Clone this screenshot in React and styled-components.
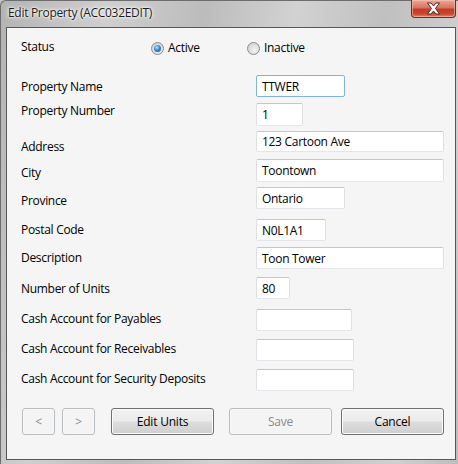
import React from "react";
import styled, { createGlobalStyle } from "styled-components";

const GlobalStyle = createGlobalStyle`
  html, body {
    margin: 0;
    padding: 0;
    background: #c4c4c4;
  }
  body {
    font-family: "Open Sans", "Noto Sans", sans-serif;
    font-size: 12px;
    letter-spacing: -0.3px;
    color: #000;
  }
`;

const Frame = styled.div`
  width: 458px;
  height: 464px;
  box-sizing: border-box;
  padding: 0 2px 4px 5px;
  display: flex;
  flex-direction: column;
  background: linear-gradient(
    100deg,
    #b3b3b3 0%,
    #cfcfcf 20%,
    #bcbcbc 38%,
    #d2d2d2 55%,
    #c0c0c0 72%,
    #d0d0d0 88%,
    #bdbdbd 100%
  );
  border-top: 1px solid #6d6d6d;
  border-left: 1px solid #6d6d6d;
  border-top-left-radius: 6px;
`;

const TitleBar = styled.div`
  height: 26px;
  display: flex;
  align-items: flex-start;
  justify-content: space-between;
`;

const Title = styled.div`
  padding: 4px 0 0 2px;
  font-size: 12px;
  line-height: 16px;
  color: #1a1a1a;
  text-shadow: 0 0 6px #fff, 0 0 3px #fff, 0 0 2px #fff;
`;

const CloseButton = styled.div`
  width: 45px;
  height: 18px;
  margin-top: -1px;
  display: flex;
  align-items: center;
  justify-content: center;
  box-sizing: border-box;
  border: 1px solid #6b2a22;
  border-top: none;
  border-radius: 0 0 4px 4px;
  background: linear-gradient(
    #e9a99a 0%,
    #d9735f 45%,
    #c43c25 55%,
    #c8452d 80%,
    #e0806a 100%
  );
  box-shadow: inset 0 0 0 1px rgba(255, 200, 190, 0.55);
`;

const Panel = styled.div`
  flex: 1;
  box-sizing: border-box;
  border: 1px solid #575757;
  background: #f5f5f5;
  padding: 10px 11px 0 14px;
  display: flex;
  flex-direction: column;
`;

const Row = styled.div`
  display: grid;
  grid-template-columns: 235px 1fr;
  align-items: start;
  height: ${(p) => p.$h}px;
`;

const Label = styled.div`
  padding-top: ${(p) => p.$dy}px;
  line-height: 16px;
  white-space: nowrap;
`;

const RadioGroup = styled.div`
  display: flex;
  padding-top: 2px;
  margin-left: -105px;
`;

const RadioOption = styled.label`
  display: flex;
  align-items: center;
  gap: 4px;
  width: 96px;
  line-height: 16px;
`;

const RadioDot = styled.span`
  width: 11px;
  height: 11px;
  border-radius: 50%;
  border: 1px solid #8a8c8e;
  background: radial-gradient(circle at 60% 65%, #f4f4f4 0%, #d6d6d6 70%, #c8c8c8 100%);
  display: flex;
  align-items: center;
  justify-content: center;
  &::after {
    content: "";
    display: ${(p) => (p.$checked ? "block" : "none")};
    width: 7px;
    height: 7px;
    border-radius: 50%;
    background: radial-gradient(circle at 40% 35%, #bfe4fb 0%, #3a8ad0 45%, #134f86 100%);
  }
`;

const Field = styled.input`
  width: ${(p) => p.$w}px;
  height: ${(p) => p.$hgt || 22}px;
  box-sizing: border-box;
  margin: 0;
  padding: 0 0 0 5px;
  border: 1px solid;
  border-color: ${(p) =>
    p.$focus ? "#7fb3e3" : "#c3c6cc #dcdfe4 #e3e6ea #dcdfe4"};
  border-radius: 2px;
  background: #fff;
  font-family: "Open Sans", "Noto Sans", sans-serif;
  font-size: 12px;
  letter-spacing: -0.3px;
  color: #000;
  outline: none;
`;

const ButtonBar = styled.div`
  display: flex;
  margin-top: 17px;
  padding-left: 1px;
`;

const Button = styled.button`
  width: ${(p) => p.$w}px;
  height: 27px;
  margin: 0 0 0 ${(p) => p.$ml || 0}px;
  padding: 0;
  box-sizing: border-box;
  border-radius: 3px;
  font-family: "Open Sans", "Noto Sans", sans-serif;
  font-size: 12px;
  letter-spacing: -0.2px;
  border: 1px solid ${(p) => (p.disabled ? "#b9bcbf" : "#707070")};
  color: ${(p) => (p.disabled ? "#8a8a8a" : "#000")};
  background: ${(p) =>
    p.disabled
      ? "#f4f4f4"
      : "linear-gradient(#f2f2f2 0%, #ebebeb 48%, #dddddd 52%, #cfcfcf 100%)"};
  box-shadow: inset 0 0 0 1px ${(p) => (p.disabled ? "#f9f9f9" : "#fbfbfb")};
`;

const rows = [
  { label: "Property Name", value: "TTWER", w: 89, h: 28, dy: 4, focus: true },
  { label: "Property Number", value: "1", w: 47, h: 28, dy: 0, fh: 23 },
  { label: "Address", value: "123 Cartoon Ave", w: 188, h: 28, dy: 8, fh: 21 },
  { label: "City", value: "Toontown", w: 188, h: 28, dy: 6, fh: 23 },
  { label: "Province", value: "Ontario", w: 89, h: 32, dy: 6 },
  { label: "Postal Code", value: "N0L1A1", w: 70, h: 28, dy: 3 },
  { label: "Description", value: "Toon Tower", w: 188, h: 30, dy: 3 },
  { label: "Number of Units", value: "80", w: 34, h: 32, dy: 4 },
  { label: "Cash Account for Payables", value: "", w: 96, h: 30, dy: 2 },
  { label: "Cash Account for Receivables", value: "", w: 98, h: 30, dy: 2 },
  { label: "Cash Account for Security Deposits", value: "", w: 98, h: 22, dy: 2 },
];

function CloseIcon() {
  return (
    <svg width="15" height="13" viewBox="0 0 15 13">
      <path
        d="M1.5 1 H5 L7.5 4 L10 1 H13.5 L9.5 6.5 L13.5 12 H10 L7.5 9 L5 12 H1.5 L5.5 6.5 Z"
        fill="#fff"
        stroke="#4a2a26"
        strokeWidth="1"
        strokeLinejoin="round"
      />
    </svg>
  );
}

export default function App() {
  return (
    <>
      <GlobalStyle />
      <Frame>
        <TitleBar>
          <Title>Edit Property (ACC032EDIT)</Title>
          <CloseButton>
            <CloseIcon />
          </CloseButton>
        </TitleBar>
        <Panel>
          <Row $h={37}>
            <Label $dy={1}>Status</Label>
            <RadioGroup>
              <RadioOption>
                <RadioDot $checked />
                Active
              </RadioOption>
              <RadioOption>
                <RadioDot />
                Inactive
              </RadioOption>
            </RadioGroup>
          </Row>
          {rows.map((r) => (
            <Row key={r.label} $h={r.h}>
              <Label $dy={r.dy}>{r.label}</Label>
              <Field
                readOnly
                defaultValue={r.value}
                $w={r.w}
                $hgt={r.fh}
                $focus={r.focus}
              />
            </Row>
          ))}
          <ButtonBar>
            <Button $w={33} disabled>&lt;</Button>
            <Button $w={33} $ml={7} disabled>&gt;</Button>
            <Button $w={103} $ml={16}>Edit Units</Button>
            <Button $w={103} $ml={15} disabled>Save</Button>
            <Button $w={103} $ml={9}>Cancel</Button>
          </ButtonBar>
        </Panel>
      </Frame>
    </>
  );
}
